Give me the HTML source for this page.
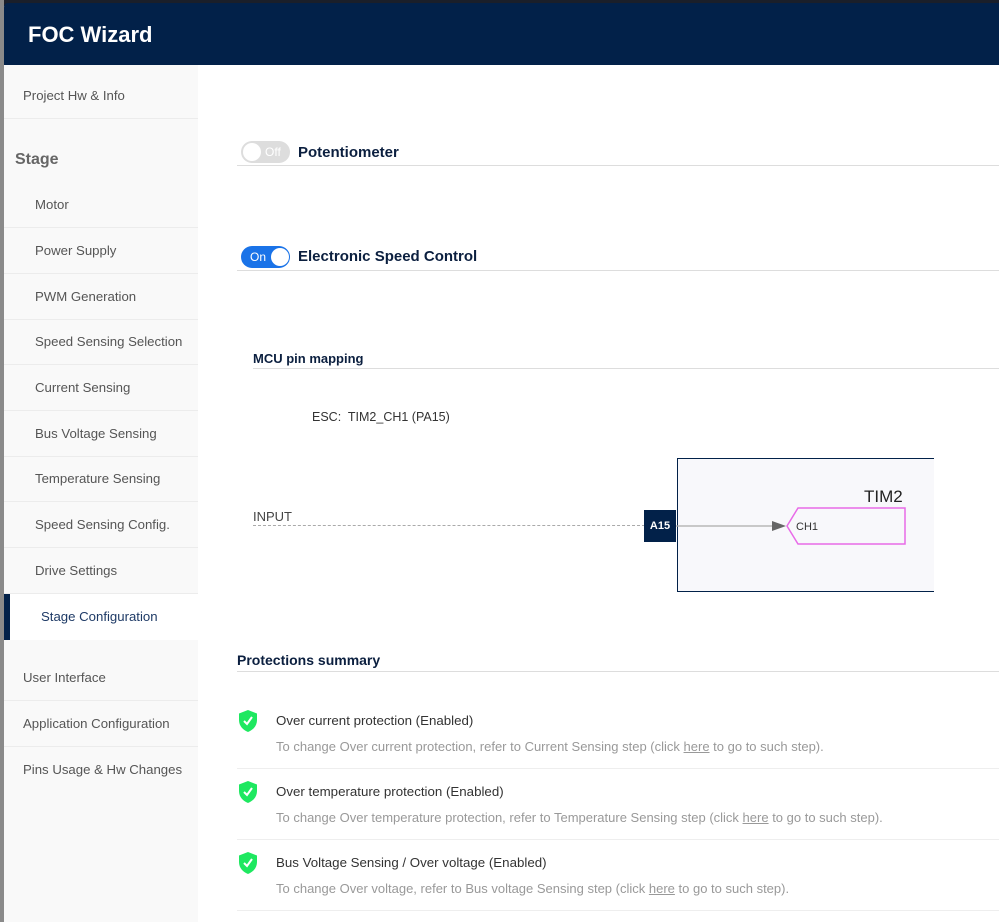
<!DOCTYPE html><html><head><style>
*{margin:0;padding:0;box-sizing:border-box}
body{width:999px;height:922px;position:relative;overflow:hidden;background:#fff;font-family:"Liberation Sans",sans-serif;}
.a{position:absolute;white-space:nowrap}
.sb{position:absolute;left:4px;top:65px;width:194px;height:857px;background:#f9f9f9}
.it{position:absolute;left:4px;width:194px;height:46px;border-bottom:1px solid #ececec;font-size:13.2px;color:#555;line-height:46px}
.hl{border-bottom:1px solid #ddd;position:absolute}
.pt{font-size:13.3px;color:#333}
.ps{font-size:13px;color:#999}
</style></head><body>
<div class="a" style="left:0;top:0;width:999px;height:6px;background:#1a1f2a"></div>
<div class="a" style="left:0;top:0;width:4px;height:922px;background:#8a8a8a"></div>
<div class="a" style="left:4px;top:3px;width:995px;height:62px;background:#022149;border-top-left-radius:4px"></div>
<div class="a" style="left:28px;top:22px;font-size:22px;color:#fff;font-weight:bold">FOC Wizard</div>
<div class="sb"></div>
<div class="it" style="top:73px;padding-left:19px">Project Hw &amp; Info</div>
<div class="a" style="left:15px;top:151px;font-size:16px;font-weight:bold;color:#666">Stage</div>
<div class="it" style="top:182px;padding-left:31px">Motor</div>
<div class="it" style="top:228px;padding-left:31px">Power Supply</div>
<div class="it" style="top:274px;padding-left:31px">PWM Generation</div>
<div class="it" style="top:319px;padding-left:31px">Speed Sensing Selection</div>
<div class="it" style="top:365px;padding-left:31px">Current Sensing</div>
<div class="it" style="top:411px;padding-left:31px">Bus Voltage Sensing</div>
<div class="it" style="top:456px;padding-left:31px">Temperature Sensing</div>
<div class="it" style="top:502px;padding-left:31px">Speed Sensing Config.</div>
<div class="it" style="top:548px;padding-left:31px">Drive Settings</div>
<div class="it" style="top:594px;padding-left:37px;background:#fff;color:#1e3a66;border:none"><div class="a" style="left:0;top:0;width:6px;height:46px;background:#022149"></div>Stage Configuration</div>
<div class="it" style="top:655px;padding-left:19px">User Interface</div>
<div class="it" style="top:701px;padding-left:19px">Application Configuration</div>
<div class="it" style="top:747px;padding-left:19px;border:none">Pins Usage &amp; Hw Changes</div>

<div class="a" style="left:241px;top:141px;width:49px;height:22px;border-radius:11px;background:#ddd"></div>
<div class="a" style="left:243px;top:143px;width:18px;height:18px;border-radius:9px;background:#fff"></div>
<div class="a" style="left:265px;top:145px;font-size:12px;color:#fff">Off</div>
<div class="a" style="left:298px;top:144px;font-size:15px;font-weight:bold;color:#0b1f3f">Potentiometer</div>
<div class="hl" style="left:237px;top:165px;width:762px"></div>

<div class="a" style="left:241px;top:246px;width:49px;height:22px;border-radius:11px;background:#1a73e8"></div>
<div class="a" style="left:271px;top:248px;width:18px;height:18px;border-radius:9px;background:#fff"></div>
<div class="a" style="left:250px;top:250px;font-size:12px;color:#fff">On</div>
<div class="a" style="left:298px;top:248px;font-size:15px;font-weight:bold;color:#0b1f3f">Electronic Speed Control</div>
<div class="hl" style="left:237px;top:270px;width:762px"></div>

<div class="a" style="left:253px;top:351px;font-size:13px;font-weight:bold;color:#0b1f3f">MCU pin mapping</div>
<div class="hl" style="left:253px;top:368px;width:746px"></div>
<div class="a" style="left:312px;top:410px;font-size:12.5px;color:#333">ESC:&nbsp; TIM2_CH1 (PA15)</div>
<div class="a" style="left:253px;top:509px;font-size:13px;color:#444">INPUT</div>
<div class="a" style="left:253px;top:525px;width:392px;border-top:1px dashed #aaa"></div>
<div class="a" style="left:677px;top:458px;width:257px;height:134px;background:#f8f8fb;border:1.5px solid #022149;border-right:none"></div>
<div class="a" style="left:644px;top:510px;width:32px;height:32px;background:#022149;color:#fff;font-size:11px;font-weight:bold;line-height:32px;text-align:center">A15</div>
<svg class="a" style="left:676px;top:500px" width="240" height="50">
<line x1="0" y1="26" x2="100" y2="26" stroke="#aaa" stroke-width="1.2"/>
<polygon points="96,21 110,26 96,31" fill="#666"/>
<polygon points="122,8 229,8 229,44 122,44 111,26" fill="none" stroke="#e86be8" stroke-width="1.5"/>
<text x="120" y="30" font-size="11" fill="#333" font-family="Liberation Sans">CH1</text>
</svg>
<div class="a" style="left:864px;top:487px;font-size:17px;color:#222">TIM2</div>

<div class="a" style="left:237px;top:652px;font-size:14px;font-weight:bold;color:#0b1f3f">Protections summary</div>
<div class="hl" style="left:237px;top:671px;width:762px"></div>

<svg class="a" style="left:238px;top:709px" width="20" height="24"><path d="M10 1 L19 4.5 V11 C19 17 15 21 10 23 C5 21 1 17 1 11 V4.5Z" fill="#1ee860"/><path d="M6 12 L9 15 L14 8" stroke="#fff" stroke-width="2" fill="none"/></svg>
<div class="a pt" style="left:276px;top:713px">Over current protection (Enabled)</div>
<div class="a ps" style="left:276px;top:739px">To change Over current protection, refer to Current Sensing step (click <u>here</u> to go to such step).</div>
<div class="hl" style="left:237px;top:768px;width:762px;border-color:#eee"></div>
<svg class="a" style="left:238px;top:780px" width="20" height="24"><path d="M10 1 L19 4.5 V11 C19 17 15 21 10 23 C5 21 1 17 1 11 V4.5Z" fill="#1ee860"/><path d="M6 12 L9 15 L14 8" stroke="#fff" stroke-width="2" fill="none"/></svg>
<div class="a pt" style="left:276px;top:784px">Over temperature protection (Enabled)</div>
<div class="a ps" style="left:276px;top:810px">To change Over temperature protection, refer to Temperature Sensing step (click <u>here</u> to go to such step).</div>
<div class="hl" style="left:237px;top:839px;width:762px;border-color:#eee"></div>
<svg class="a" style="left:238px;top:851px" width="20" height="24"><path d="M10 1 L19 4.5 V11 C19 17 15 21 10 23 C5 21 1 17 1 11 V4.5Z" fill="#1ee860"/><path d="M6 12 L9 15 L14 8" stroke="#fff" stroke-width="2" fill="none"/></svg>
<div class="a pt" style="left:276px;top:855px">Bus Voltage Sensing / Over voltage (Enabled)</div>
<div class="a ps" style="left:276px;top:881px">To change Over voltage, refer to Bus voltage Sensing step (click <u>here</u> to go to such step).</div>
<div class="hl" style="left:237px;top:910px;width:762px;border-color:#eee"></div>
</body></html>
